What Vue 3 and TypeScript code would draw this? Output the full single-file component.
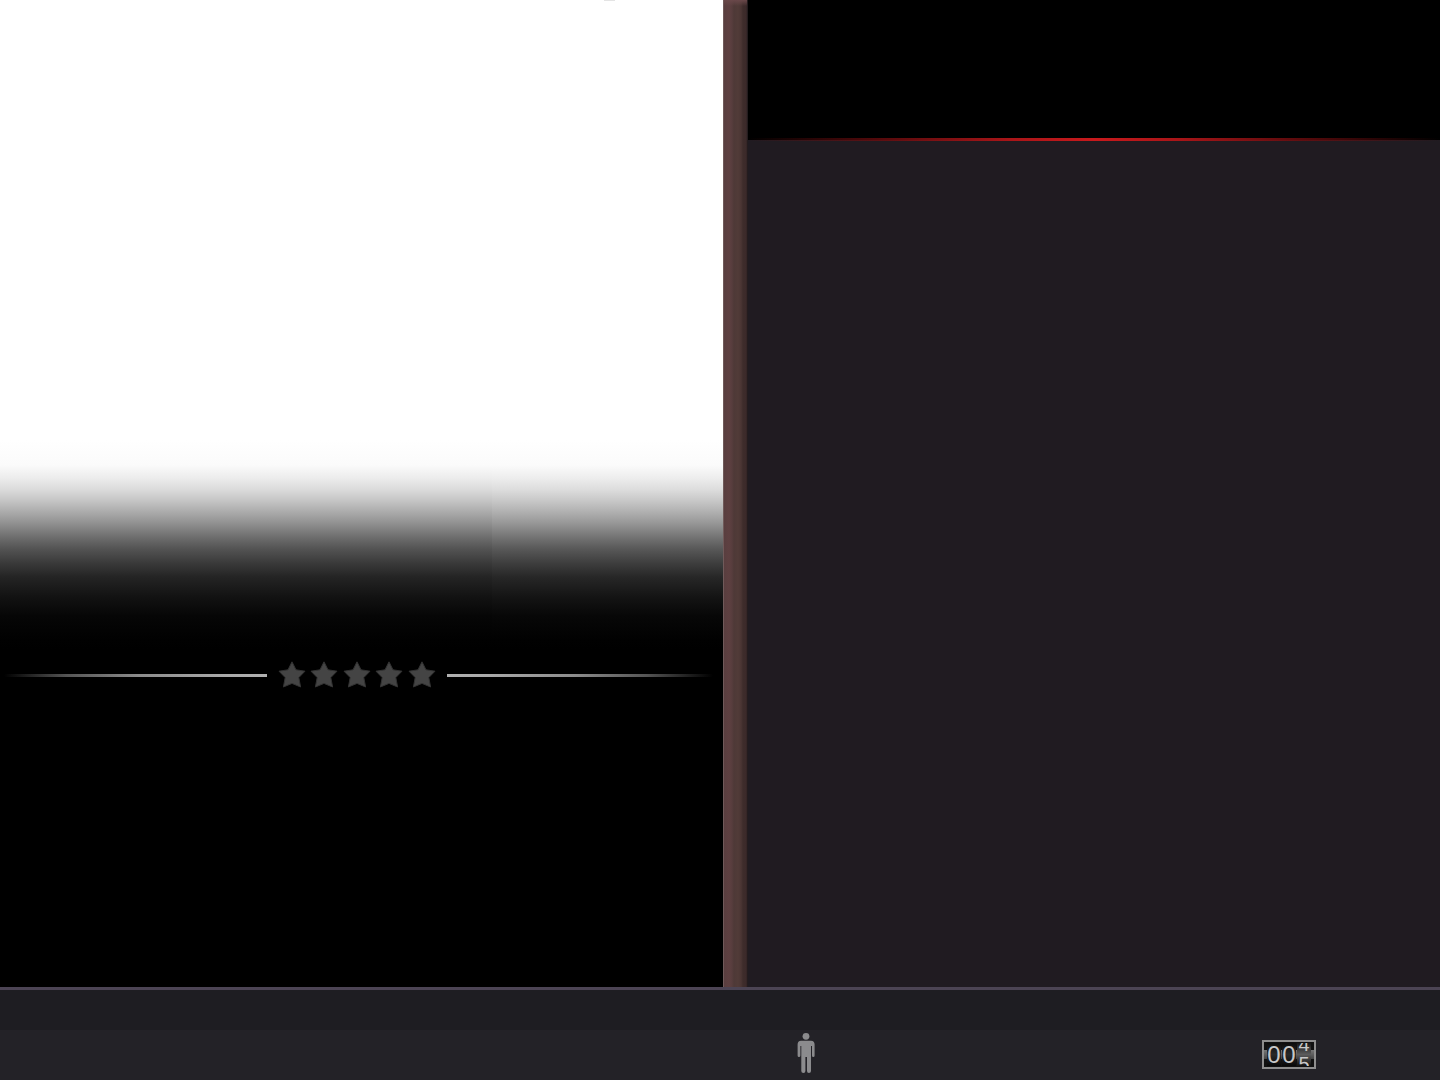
<script setup lang="ts">
const stars: number[] = [1, 2, 3, 4, 5]
const fixedDigits: string[] = ['0', '0']
const rollingDigits: string[] = ['4', '5']
</script>

<template>
  <div class="app">
    <main class="stage">
      <section class="poster">
        <div class="fade">
          <i class="notch"></i>
          <i class="shade"></i>
        </div>
        <div class="rating">
          <i class="line"></i>
          <div class="stars" role="img" aria-label="No rating">
            <svg v-for="s in stars" :key="s" class="star" viewBox="0 0 28 28" aria-hidden="true">
              <path
                d="M14 0.8 L18 8.8 L27 10.2 L20.8 16.6 L22.6 26 L14 22.4 L5.4 26 L7.2 16.6 L1 10.2 L10 8.8 Z"
                fill="#444" stroke="#323232" stroke-width="1" stroke-linejoin="round"
              />
            </svg>
          </div>
          <i class="line line-right"></i>
        </div>
      </section>
      <div class="post"></div>
      <section class="details">
        <header class="banner"></header>
        <i class="glow"></i>
      </section>
    </main>
    <footer class="bar">
      <div class="bar-upper"></div>
      <div class="bar-lower">
        <div class="slot slot-person">
          <svg class="person" viewBox="0 0 20 42" role="img" aria-label="Players">
            <g fill="#8b8b8d">
              <circle cx="10" cy="4.3" r="3.4" />
              <path d="M5 8.7 H15 Q18.6 8.7 18.6 12.5 V23.5 Q18.6 25 17.3 25 Q16 25 16 23.5 V14 H15 V39 Q15 41 12.9 41 Q11 41 11 39 V25 H9.4 V39 Q9.4 41 7.4 41 Q5.3 41 5.3 39 V14 H4.4 V23.5 Q4.4 25 3 25 Q1.6 25 1.6 23.5 V12.5 Q1.6 8.7 5 8.7 Z" />
            </g>
          </svg>
        </div>
        <div class="slot slot-counter">
          <div class="counter">
            <span v-for="(d, i) in fixedDigits" :key="i" class="wheel">{{ d }}</span>
            <span class="wheel rolling">
              <span v-for="d in rollingDigits" :key="d" class="roll">{{ d }}</span>
            </span>
          </div>
        </div>
      </div>
    </footer>
  </div>
</template>

<style>
body {
  background: #000;
}
</style>

<style scoped>
.app {
  display: flex;
  flex-direction: column;
  min-height: 100vh;
}
.stage {
  flex: 1;
  display: flex;
}
.poster {
  flex: 1 1 31px;
  background: #000;
}
.fade {
  position: relative;
  height: 660px;
  background: linear-gradient(#fff 440px, #fbfbfb 465px, #ececec 479px, #dcdcdc 490px, #c7c7c7 501px, #b0b0b0 512px, #959595 524px, #747474 537px, #585858 549px, #3e3e3e 563px, #272727 577px, #141414 597px, #070707 616px, #010101 640px, #000 650px);
}
.shade {
  position: absolute;
  top: 0;
  left: 0;
  width: 68%;
  height: 100%;
  background: linear-gradient(#fff 440px, #fbfbfb 465px, #ebebeb 479px, #dadada 490px, #c4c4c4 501px, #ababab 512px, #8f8f8f 524px, #6e6e6e 537px, #535353 549px, #3a3a3a 563px, #242424 577px, #121212 597px, #060606 616px, #010101 640px, #000 650px);
}
.notch {
  position: absolute;
  z-index: 1;
  top: 0;
  left: 604px;
  width: 11px;
  height: 1px;
  background: #e4e4e4;
}
.rating {
  display: flex;
  align-items: center;
  gap: 11px;
  height: 30px;
  padding-right: 10px;
}
.line {
  flex: 1;
  height: 3px;
  background: linear-gradient(90deg, #000 4px, #555 25%, #8c8c8c 52%, #aaa 85%, #b0b0b0);
}
.line-right {
  background: linear-gradient(270deg, #000, #555 25%, #8c8c8c 52%, #aaa 85%, #b0b0b0);
}
.stars {
  display: flex;
  justify-content: space-between;
  width: 158px;
}
.star {
  width: 28px;
  height: 28px;
}
.post {
  flex: none;
  box-sizing: border-box;
  width: 25px;
  border-left: 1px solid #705a5a;
  border-right: 1px solid #241c1e;
  background:
    linear-gradient(#6a484a, transparent) no-repeat 0 0 / 100% 6px,
    linear-gradient(90deg, #593e3f, #5e4041 5px, #573d3d 8px, #4e3937 10px, #513b38 14px, #4b3634 17px, #3e2c2b 19px, #3c2a2a 22px, #302224 23px);
}
.details {
  position: relative;
  flex: 1 1 0;
  background: #201b21;
}
.banner {
  height: 140px;
  background: #000;
}
.glow {
  position: absolute;
  top: 138px;
  left: 0;
  width: 100%;
  height: 3px;
  background: linear-gradient(90deg, transparent, rgba(112, 12, 14, 0.8) 20%, #a91518 38%, #c8191c 50%, #a91518 62%, rgba(112, 12, 14, 0.8) 80%, transparent);
}
.bar {
  border-top: 3px solid #4c4454;
}
.bar-upper {
  height: 40px;
  background: #1e1d22;
}
.bar-lower {
  display: flex;
  align-items: center;
  box-sizing: border-box;
  height: 50px;
  padding-bottom: 2px;
  background: #232227;
}
.slot {
  display: flex;
  box-sizing: border-box;
}
.slot-person {
  flex: 1;
  padding-left: 55.3%;
}
.slot-counter {
  padding-right: 124px;
}
.person {
  width: 20px;
  height: 42px;
  margin-bottom: 2px;
}
.counter {
  display: flex;
  box-sizing: border-box;
  width: 54px;
  height: 29px;
  padding: 1px 3px;
  gap: 1px;
  border: 2px solid #8e8e8e;
  background: linear-gradient(#111 8px, #777 8px, #444 17px, #111 17px);
}
.wheel {
  flex: 1;
  height: 23px;
  overflow: hidden;
  background: linear-gradient(#0c0c0c, #292929 50%, #080808);
  color: #c8c8c8;
  font: 24px/23px "Liberation Sans", Arial, sans-serif;
  text-align: center;
}
.rolling {
  display: flex;
  flex-direction: column;
  justify-content: center;
  background: linear-gradient(#161616, #5c5c5c 50%, #111);
  font-size: 20px;
  line-height: 20px;
}
.roll {
  flex: none;
}
</style>
